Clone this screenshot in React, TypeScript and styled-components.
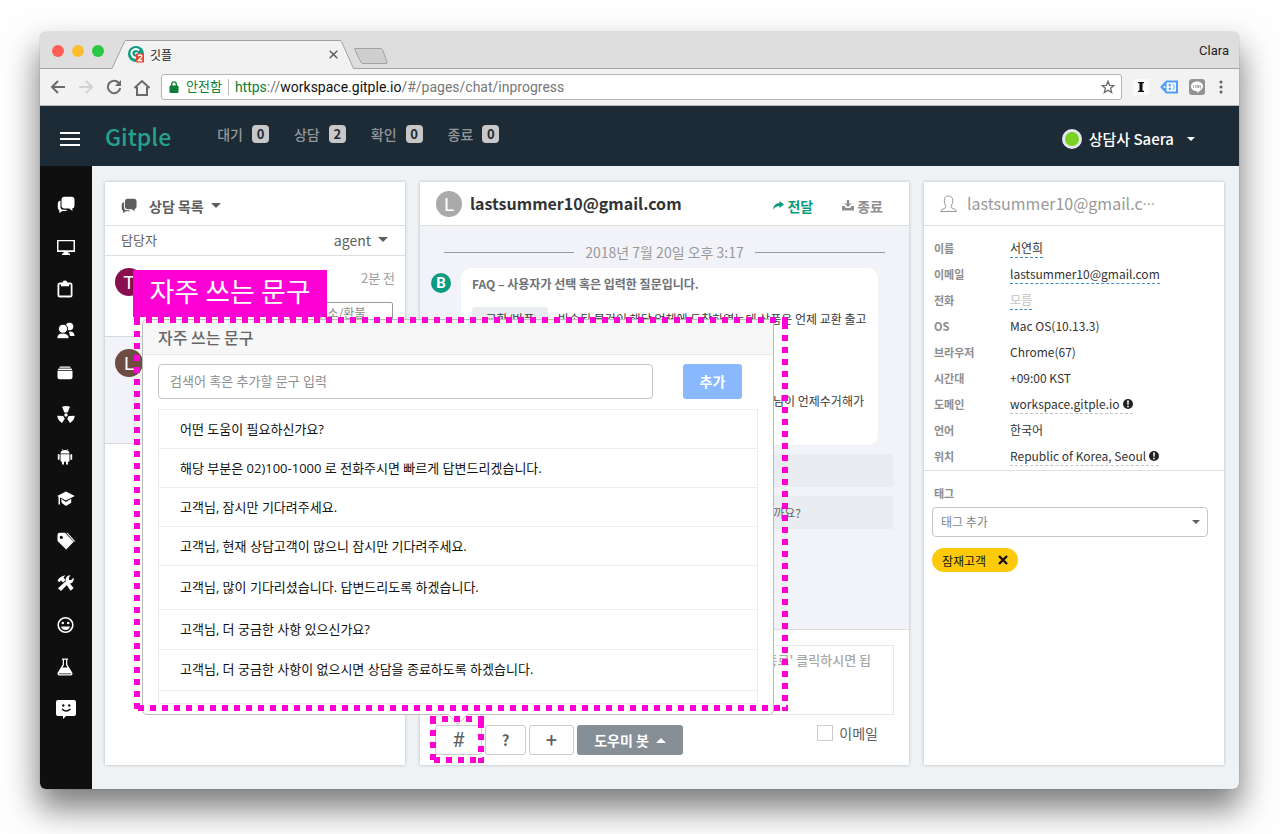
import React from "react";
import styled, { createGlobalStyle, css } from "styled-components";

const PINK = "#ff00d4";

const Global = createGlobalStyle`
  *, *::before, *::after { box-sizing: border-box; }
  body {
    margin: 0;
    background: #fefefe;
    font-family: "Noto Sans CJK KR", "Noto Sans", sans-serif;
    font-size: 13px;
    color: #5e5e5e;
  }
  button, input, select, textarea { font: inherit; color: inherit; margin: 0; }
  button { cursor: pointer; padding: 0; border: 0; background: none; }
  a { color: inherit; text-decoration: none; }
  ul { list-style: none; margin: 0; padding: 0; }
  h1, h2, p, dl, dd, dt { margin: 0; }
  svg { display: block; flex: none; }
`;

/* ---------- browser window ---------- */

const Desktop = styled.div`
  min-height: 100vh;
  padding: 32px 41px 45px 40px;
  overflow: hidden;
`;

const Window = styled.div`
  display: flex;
  flex-direction: column;
  min-height: calc(100vh - 77px);
  border-radius: 6px;
  overflow: hidden;
  background: #eef2f4;
  box-shadow: 0 0 1px rgba(0, 0, 0, 0.5), 0 18px 32px 2px rgba(0, 0, 0, 0.5);
`;

const TabStrip = styled.div`
  display: flex;
  align-items: flex-end;
  height: 37px;
  padding: 0 10px 0 12px;
  background: #dedede;
  box-shadow: inset 0 -1px #a4a4a4;
`;

const Lights = styled.div`
  display: flex;
  align-self: center;
  gap: 8px;
`;

const Light = styled.button<{ $color: string }>`
  width: 12px;
  height: 12px;
  border-radius: 50%;
  background: ${(p) => p.$color};
`;

const Tab = styled.div`
  position: relative;
  display: flex;
  align-items: center;
  width: 242px;
  height: 29px;
  margin-left: 8px;
  padding: 0 16px 0 16px;
  font-size: 12px;
  color: #222;
`;

const TabShape = styled.svg`
  position: absolute;
  inset: 0;
`;

const TabTitle = styled.span`
  position: relative;
  flex: 1;
  margin-left: 5px;
`;

const Layered = styled.span`
  position: relative;
`;

const Profile = styled.span`
  margin-left: auto;
  align-self: center;
  font: 13px/18px Roboto, "Liberation Sans", sans-serif;
  color: #222;
`;

const Toolbar = styled.div`
  display: flex;
  align-items: center;
  height: 37px;
  padding: 0 13px 0 4px;
  background: #f2f2f2;
  border-bottom: 1px solid #b6b6b6;
`;

const ToolButton = styled.button`
  display: flex;
  align-items: center;
  justify-content: center;
  width: 28px;
  height: 24px;
`;

const Address = styled.div`
  display: flex;
  align-items: center;
  flex: 1;
  height: 26px;
  margin: 0 10px 0 5px;
  padding: 0 6px 0 7px;
  border: 1px solid #b4b4b4;
  border-radius: 3px;
  background: #fff;
  color: #0b7f37;
  font-family: Roboto, "Noto Sans CJK KR", sans-serif;
  font-size: 14px;
  line-height: 18px;
`;

const Secure = styled.span`
  margin-left: 7px;
  padding-right: 6px;
  border-right: 1px solid #b8b8b8;
  font-size: 13px;
  line-height: 16px;
`;

const Url = styled.span`
  flex: 1;
  padding-left: 6px;
  color: #777;
  i { font-style: normal; color: #0b7f37; }
  b { font-weight: 400; color: #111; }
`;

/* ---------- application header ---------- */

const AppHeader = styled.header`
  display: flex;
  align-items: center;
  height: 60px;
  padding: 0 44px 0 20px;
  background: #1d2b36;
  color: #fff;
`;

const MenuButton = styled.button`
  display: flex;
  flex-direction: column;
  gap: 4px;
  width: 20px;
  margin-top: 6px;
  span { height: 2px; background: #fff; }
`;

const Brand = styled.a`
  margin-left: 25px;
  font-size: 23px;
  font-weight: 500;
  line-height: 36px;
  color: #26a18d;
`;

const Stats = styled.nav`
  display: flex;
  gap: 25px;
  margin: 0 auto 4px 46px;
`;

const Stat = styled.a`
  display: flex;
  align-items: center;
  gap: 9px;
  font-size: 14px;
  font-weight: 500;
  line-height: 20px;
  color: #949799;
`;

const Count = styled.b`
  width: 17px;
  height: 18px;
  border-radius: 4px;
  background: #c8c8c8;
  color: #1d2b36;
  font-size: 13px;
  line-height: 18px;
  text-align: center;
`;

const Agent = styled.button`
  display: flex;
  align-items: center;
  margin-top: 6px;
  font-size: 15px;
  font-weight: 500;
  line-height: 22px;
`;

const Online = styled.i`
  width: 20px;
  height: 20px;
  margin-right: 7px;
  border: 3px solid #e4e6f1;
  border-radius: 50%;
  background: #7bd321;
`;

const AgentName = styled.span`
  margin-right: 13px;
`;

const Caret = styled.i<{ $up?: boolean; $big?: boolean }>`
  display: inline-block;
  flex: none;
  border: ${(p) => (p.$big ? 5 : 4)}px solid transparent;
  ${(p) =>
    p.$up
      ? css`border-top-width: 0; border-bottom-color: currentColor;`
      : css`border-bottom-width: 0; border-top-color: currentColor;`}
`;

/* ---------- body ---------- */

const Body = styled.div`
  display: flex;
  flex: 1;
`;

const Side = styled.nav`
  display: flex;
  flex-direction: column;
  align-items: center;
  gap: 18px;
  width: 52px;
  padding-top: 27px;
  background: #0f0f0f;
`;

const SideLink = styled.a`
  display: flex;
  align-items: center;
  justify-content: center;
  width: 24px;
  height: 24px;
  color: #fff;
`;

const Workspace = styled.main`
  position: relative;
  display: flex;
  flex: 1;
  gap: 15px;
  min-width: 0;
  padding: 16px 15px 24px 13px;
`;

const Panel = styled.section<{ $fill?: boolean }>`
  display: flex;
  flex-direction: column;
  flex: ${(p) => (p.$fill ? "1 1 0" : "0 0 300px")};
  min-width: 0;
  background: #fff;
  box-shadow: 0 0 3px rgba(0, 0, 0, 0.25);
`;

const PanelHead = styled.div`
  display: flex;
  align-items: center;
  height: 44px;
  padding: 0 16px;
  border-bottom: 1px solid #dedede;
`;

const ListTitle = styled.button`
  display: flex;
  align-items: center;
  gap: 12px;
  margin-top: 4px;
  font-size: 14px;
  font-weight: 700;
  line-height: 20px;
`;

const ListName = styled.span`
  margin-right: -5px;
`;

const Owner = styled.div`
  display: flex;
  align-items: center;
  justify-content: space-between;
  height: 30px;
  padding: 0 17px 2px 16px;
  border-bottom: 1px solid #dedede;
  font-size: 13px;
`;

const OwnerPick = styled.button`
  display: flex;
  align-items: center;
  gap: 7px;
  font-size: 14px;
  line-height: 20px;
`;

const Conversation = styled.a<{ $active?: boolean }>`
  display: flex;
  align-items: flex-start;
  height: ${(p) => (p.$active ? 107 : 81)}px;
  padding: 12px 10px;
  border-bottom: 1px solid #d8d8dc;
  background: ${(p) => (p.$active ? "#f2f3f8" : "#fff")};
`;

const Avatar = styled.span<{ $bg: string; $size: number; $bold?: boolean }>`
  flex: none;
  width: ${(p) => p.$size}px;
  height: ${(p) => p.$size}px;
  border-radius: 50%;
  background: ${(p) => p.$bg};
  color: #fff;
  font-family: Roboto, sans-serif;
  font-size: ${(p) => (p.$size > 20 ? 19 : 15)}px;
  font-weight: ${(p) => (p.$bold ? 700 : 400)};
  line-height: ${(p) => p.$size + (p.$size > 20 ? 1 : 0)}px;
  text-align: center;
`;

const Bubble = styled.div`
  display: flex;
  flex-direction: column;
  align-items: flex-end;
  flex: 1;
`;

const Ago = styled.time`
  color: #a0a0a0;
  font-size: 13px;
  line-height: 20px;
`;

const Category = styled.span`
  width: 104px;
  height: 20px;
  margin: 14px 2px 0 0;
  border: 1px solid #999;
  border-radius: 2px;
  color: #8a8a8a;
  font-size: 12px;
  line-height: 20px;
  text-align: center;
`;

/* ---------- chat ---------- */

const ChatName = styled.h1`
  flex: 1;
  margin-left: 8px;
  padding-bottom: 2px;
  font-size: 16px;
  font-weight: 700;
  line-height: 26px;
  color: #333;
`;

const HeadAction = styled.button<{ $accent?: boolean }>`
  display: flex;
  align-items: center;
  gap: 3px;
  margin: 4px ${(p) => (p.$accent ? 13 : 10)}px 0 16px;
  font-size: 14px;
  font-weight: 700;
  line-height: 20px;
  color: ${(p) => (p.$accent ? "#089c7e" : "#8e8e8e")};
`;

const Thread = styled.div`
  flex: 1;
  padding: 16px 16px 0 11px;
  background: #f2f3f8;
  border-bottom: 1px solid #dedee2;
`;

const DateRule = styled.div`
  display: flex;
  align-items: center;
  gap: 11px;
  padding: 0 8px 0 13px;
  color: #999;
  font-size: 14px;
  line-height: 20px;
  &::before, &::after { content: ""; flex: 1; height: 1px; background: #999; }
`;

const Message = styled.div`
  display: flex;
  align-items: flex-start;
  gap: 10px;
  margin-top: 6px;
  padding-right: 15px;
  > span { margin-top: 5px; }
`;

const Card = styled.div`
  flex: 1;
  height: 177px;
  padding: 7px 11px;
  border-radius: 10px;
  background: #fff;
  line-height: 18px;
`;

const CardTitle = styled.p`
  font-size: 12px;
  font-weight: 700;
  color: #6e7175;
`;

const Question = styled.p`
  display: flex;
  align-items: center;
  gap: 10px;
  margin-top: 14px;
  font-size: 12px;
  line-height: 24px;
  color: #3a3a3a;
  white-space: nowrap;
`;

const Chip = styled.span`
  width: 76px;
  border-radius: 3px;
  background: #e9edf1;
  text-align: center;
`;

const Answer = styled.p`
  margin-top: 58px;
  padding-right: 3px;
  font-size: 12px;
  line-height: 24px;
  color: #3a3a3a;
  text-align: right;
`;

const Choice = styled.button`
  display: block;
  width: calc(100% - 30px);
  height: 33px;
  margin: 9px 0 0 30px;
  padding-right: 92px;
  background: #e9ecf1;
  font-size: 12px;
  color: #666;
  text-align: right;
`;

const Composer = styled.div`
  padding: 15px 15px 10px;
`;

const Draft = styled.textarea`
  display: block;
  width: 100%;
  height: 70px;
  padding: 4px 22px 4px 4px;
  border: 1px solid #e8e8e8;
  resize: none;
  font-size: 13px;
  font-weight: 500;
  line-height: 20px;
  color: #444;
  text-align: right;
  &::placeholder { color: #a8a8a8; }
`;

const Tools = styled.div`
  display: flex;
  align-items: flex-start;
  gap: 3px;
  margin-top: 10px;
`;

const Tool = styled.button<{ $width: number; $large?: boolean }>`
  display: flex;
  align-items: center;
  justify-content: center;
  width: ${(p) => p.$width}px;
  height: 30px;
  border: 1px solid #ccc;
  border-radius: 3px;
  font-family: ${(p) => (p.$large ? "Roboto, sans-serif" : "inherit")};
  font-size: ${(p) => (p.$large ? 20 : 15)}px;
  font-weight: ${(p) => (p.$large ? 400 : 700)};
  line-height: 28px;
`;

const BotButton = styled.button`
  display: flex;
  align-items: center;
  justify-content: center;
  gap: 7px;
  width: 106px;
  height: 30px;
  border-radius: 3px;
  background: #868e96;
  color: #fff;
  font-size: 14px;
  font-weight: 700;
`;

const MailOption = styled.label`
  display: flex;
  align-items: center;
  gap: 6px;
  margin: 0 16px 0 auto;
  font-size: 14px;
  line-height: 16px;
`;

const Tick = styled.input`
  appearance: none;
  width: 16px;
  height: 16px;
  border: 1px solid #ccc;
  background: #fff;
`;

/* ---------- customer ---------- */

const CustomerName = styled.h2`
  margin-left: 10px;
  font-size: 16px;
  font-weight: 400;
  line-height: 26px;
  color: #999;
  white-space: nowrap;
`;

const Cut = styled.span`
  font-family: Roboto, sans-serif;
`;

const Facts = styled.dl`
  display: grid;
  grid-template-columns: 76px 1fr;
  grid-auto-rows: 26px;
  align-items: center;
  padding: 9px 10px 1px;
  border-bottom: 1px solid #dedede;
  line-height: 18px;
`;

const Term = styled.dt`
  font-size: 11px;
  font-weight: 700;
  color: #8c8c8c;
`;

const Value = styled.dd<{ $dash?: string; $muted?: boolean }>`
  display: flex;
  align-items: center;
  gap: 3px;
  justify-self: start;
  height: 19px;
  font-size: 12px;
  font-weight: ${(p) => (p.$muted ? 500 : 400)};
  color: ${(p) => (p.$muted ? "#ccc" : "#333")};
  border-bottom: 1px ${(p) => (p.$dash ? "dashed " + p.$dash : "solid transparent")};
`;

const Tags = styled.div`
  display: flex;
  flex-direction: column;
  align-items: flex-start;
  padding: 13px 16px 0 8px;
`;

const TagLabel = styled.label`
  padding-left: 2px;
  font-size: 11px;
  font-weight: 700;
  line-height: 18px;
  color: #8c8c8c;
`;

const SelectWrap = styled.div`
  display: grid;
  align-items: center;
  width: 100%;
  margin: 5px 0 11px;
  > * { grid-area: 1 / 1; }
  > i { justify-self: end; margin-right: 8px; pointer-events: none; }
`;

const TagSelect = styled.select`
  appearance: none;
  width: 100%;
  height: 30px;
  padding: 0 8px 2px;
  border: 1px solid #c6c6c6;
  border-radius: 4px;
  background: #fff;
  font-size: 12px;
  color: #7d858d;
`;

const Tag = styled.span`
  display: flex;
  align-items: center;
  gap: 12px;
  height: 24px;
  padding: 0 10px;
  border-radius: 12px;
  background: #fdca0b;
  color: #111;
  font-size: 12px;
`;

/* ---------- saved phrases ---------- */

const Popover = styled.div`
  position: absolute;
  top: 153px;
  left: 50px;
  width: 632px;
  border: 1px solid #bcbcbc;
  border-radius: 5px;
  background: #fff;
`;

const Pointer = styled.svg`
  position: absolute;
  bottom: -11px;
  left: 305px;
`;

const PopoverTitle = styled.h2`
  height: 35px;
  padding-left: 15px;
  border-bottom: 1px solid #ebebeb;
  border-radius: 5px 5px 0 0;
  background: #f7f7f7;
  font-size: 16px;
  font-weight: 500;
  line-height: 34px;
  color: #666;
`;

const SearchRow = styled.form`
  display: flex;
  gap: 30px;
  padding: 9px 31px 10px 15px;
`;

const Search = styled.input`
  flex: 1;
  min-width: 0;
  height: 35px;
  padding: 0 12px 1px 11px;
  border: 1px solid #c4c4c4;
  border-radius: 4px;
  font-family: "Open Sans", "Noto Sans CJK KR", sans-serif;
  font-size: 13px;
  &::placeholder { color: #8e8e8e; }
`;

const AddButton = styled.button`
  width: 59px;
  height: 35px;
  padding-bottom: 1px;
  border-radius: 3px;
  background: #8ab8ff;
  color: #fff;
  font-size: 14px;
  font-weight: 700;
`;

const Phrases = styled.ul`
  margin: 0 15px 10px 15px;
  border: 1px solid #ebebeb;
`;

const Phrase = styled.li<{ $height: number }>`
  height: ${(p) => p.$height}px;
  padding-left: 21px;
  border-bottom: 1px solid #ebebeb;
  font-family: "Open Sans", "Noto Sans CJK KR", sans-serif;
  font-size: 13px;
  line-height: 38px;
  padding-top: ${(p) => (p.$height > 43 ? 2 : 0)}px;
  color: #111;
`;

const PhraseEnd = styled.li`
  height: 12px;
`;

/* ---------- guide marks ---------- */

const Marker = styled.div<{ $x: number; $y: number; $w: number; $h: number }>`
  position: absolute;
  left: ${(p) => p.$x}px;
  top: ${(p) => p.$y}px;
  width: ${(p) => p.$w}px;
  height: ${(p) => p.$h}px;
  pointer-events: none;
  background:
    repeating-linear-gradient(90deg, ${PINK} 0 6px, transparent 6px 12px) top / 100% 6px no-repeat,
    repeating-linear-gradient(90deg, transparent 0 4px, ${PINK} 4px 10px, transparent 10px 12px) bottom / 100% 6px no-repeat,
    repeating-linear-gradient(180deg, transparent 0 2px, ${PINK} 2px 8px, transparent 8px 12px) left / 6px 100% no-repeat,
    repeating-linear-gradient(180deg, transparent 0 6px, ${PINK} 6px 12px) right / 6px 100% no-repeat;
`;

const MarkerLabel = styled.div`
  position: absolute;
  top: 104px;
  left: 41px;
  width: 194px;
  height: 47px;
  background: ${PINK};
  color: #fff;
  font-size: 27px;
  font-weight: 400;
  line-height: 42px;
  text-align: center;
`;

/* ---------- icons ---------- */

const ChatsIcon = ({ size = 18 }: { size?: number }) => (
  <svg width={size} height={size} viewBox="0 0 18 18" fill="currentColor">
    <path d="M7.500.8h7q3 0 3 3v5.700q0 2.600-2.300 3l.3 2.500-3.300-2.400H7.500q-3 0-3-3V3.800q0-3 3-3z" />
    <path d="M3.500 4.500Q.800 5 .800 7.500V12q0 1.600 1.500 2.200V17l3.200-2h4.800L8.900 13.700H6.500q-3 0-3-3z" />
  </svg>
);

const sideIcons: [string, React.ReactNode][] = [
  ["대화", <ChatsIcon key="i" />],
  ["모니터", <path key="i" fillRule="evenodd" d="M0 2h18v12h-6.500v1.500h1.500V17H5v-1.500h1.500V14H0zM1.500 3.300v9h15v-9z" />],
  ["업무", <path key="i" fillRule="evenodd" d="M3 2.500h2.500Q6 .5 8 .5t2.500 2H13q2.500 0 2.500 2.500V15q0 2.500-2.500 2.500H3Q.500 17.500.500 15V5Q.500 2.500 3 2.500zM2.300 4.600v11h11.400v-11H12V6.200H4V4.600z" />],
  ["고객", <g key="i"><circle cx="12.500" cy="4.500" r="3.800" /><path d="M12 9.500q5.500-.5 5.500 4.500H13z" /><circle cx="6" cy="6.800" r="4.600" stroke="#0f0f0f" strokeWidth="1" /><path d="M0 16.500Q0 11 6 11.200T12 16.500z" stroke="#0f0f0f" strokeWidth=".6" /></g>],
  ["보관함", <path key="i" d="M3 2.500h10l.8 1.300H2.200zM1.500 4.600h13l.7 1.300H.8zM.500 6.700h15v6.500q0 2-2 2h-11q-2 0-2-2z" />],
  ["분석", <g key="i"><path d="M5 .800Q9-.6 13 .8L10.600 6.500H7.400z" /><path d="M.200 9.800l6 .3 1.600 2.700L5 17Q.800 14.500.200 9.800zM17.800 9.800l-6 .3-1.600 2.700L13 17q4.200-2.500 4.800-7.200z" /><circle cx="9" cy="9" r="1.700" /></g>],
  ["안드로이드", <g key="i"><path d="M3.500 5.500Q3.500 2 8 2t4.500 3.500zM3.500 6.300h9v6.500q0 1-1 1h-7q-1 0-1-1zM.800 6.500q.8-.8 1.800 0v5q-1 .8-1.800 0zM13.400 6.500q.8-.8 1.800 0v5q-1 .8-1.800 0z" /><path d="M5 13h2v3.500H5zM9 13h2v3.500H9z" /><path d="M5 1l1 1.500M11 1l-1 1.500" stroke="currentColor" strokeWidth=".7" /></g>],
  ["학습", <g key="i"><path d="M9 1.500L17.800 6 9 10.500.200 6z" /><path d="M1.500 6.500H3V14.500H1.500zM4 8.800L9 12l5.200-3.200v4L9 16l-4.200-2.900z" /></g>],
  ["태그", <path key="i" fillRule="evenodd" d="M.500 3Q.500.800 2.800.800H8L16.700 9.800 9.200 17.500.500 9zM4.300 3.800a1.600 1.600 0 1 0 0 3.200 1.600 1.600 0 0 0 0-3.200zM9.200.800H10.500L18 9l-.7.800z" />],
  ["설정", <g key="i"><path d="M.500 6.500Q3 2 8.500 1.200L6.500 3.500l2 2.500-2.500 2.500-2.100-2-1.600 1.700zM9.600 10.900L12 8.500l4.600 5.400-2.900 2.800z" /><path d="M1 14.300l7.700-7Q8 3.300 11.500 1.500l2-.3-1.800 2.800.5 1.900 2 .2 2.300-2.500q.9 4.400-2.700 6l-2.700.2L4 17z" /></g>],
  ["만족도", <g key="i"><circle cx="8.500" cy="9" r="7.300" fill="none" stroke="currentColor" strokeWidth="1.600" /><circle cx="5.800" cy="7" r="1.300" /><circle cx="11.200" cy="7" r="1.300" /><path d="M4 10.500h9q-1 3.500-4.500 3.500T4 10.500z" /></g>],
  ["실험실", <path key="i" fillRule="evenodd" d="M5 .500h6v1.300h-.7v4.700L15.500 15q.3 2-1.500 2.500H2Q.200 17 .500 15L5.700 6.500V1.800H5zM7 1.800V7l-1.500 2.500h5L9 7V1.800zM1.600 15.500q.2.700 1 .8h10.800q.8-.1 1-.8z" />],
];

const SideGlyph = ({ children }: { children: React.ReactNode }) => (
  <svg width="18" height="18" viewBox="0 0 18 18" fill="currentColor">{children}</svg>
);

const InfoDot = () => (
  <svg width="10" height="10" viewBox="0 0 10 10">
    <circle cx="5" cy="5" r="5" fill="#222" />
    <path d="M4.100 1.500h1.800l-.3 4.300H4.400zM4.200 6.700h1.600v1.600H4.200z" fill="#fff" />
  </svg>
);

const stats = [["대기", 0], ["상담", 2], ["확인", 0], ["종료", 0]] as const;

const facts: { term: string; value: string; dash?: string; muted?: boolean; info?: boolean }[] = [
  { term: "이름", value: "서연희", dash: "#428bca" },
  { term: "이메일", value: "lastsummer10@gmail.com", dash: "#428bca" },
  { term: "전화", value: "모름", dash: "#428bca", muted: true },
  { term: "OS", value: "Mac OS(10.13.3)" },
  { term: "브라우저", value: "Chrome(67)" },
  { term: "시간대", value: "+09:00 KST" },
  { term: "도메인", value: "workspace.gitple.io", dash: "#c4c4c4", info: true },
  { term: "언어", value: "한국어" },
  { term: "위치", value: "Republic of Korea, Seoul", dash: "#c4c4c4", info: true },
];

const phrases: [string, number][] = [
  ["어떤 도움이 필요하신가요?", 39],
  ["해당 부분은 02)100-1000 로 전화주시면 빠르게 답변드리겠습니다.", 39],
  ["고객님, 잠시만 기다려주세요.", 39],
  ["고객님, 현재 상담고객이 많으니 잠시만 기다려주세요.", 39],
  ["고객님, 많이 기다리셨습니다. 답변드리도록 하겠습니다.", 44],
  ["고객님, 더 궁금한 사항 있으신가요?", 40],
  ["고객님, 더 궁금한 사항이 없으시면 상담을 종료하도록 하겠습니다.", 41],
];

const BrowserChrome = () => (
  <>
    <TabStrip>
      <Lights>
        <Light $color="#ff5f57" aria-label="닫기" />
        <Light $color="#ffbd2e" aria-label="최소화" />
        <Light $color="#28c940" aria-label="확대" />
      </Lights>
      <Tab>
        <TabShape width="242" height="29" viewBox="0 0 242 29">
          <path d="M0 28.500 L12.500 1.500 Q13 .5 14 .5 H228 Q229 .5 229.500 1.500 L241.500 28.500 V29 H0z" fill="#f2f2f2" />
          <path d="M0 28.500 L12.500 1.500 Q13 .5 14 .5 H228 Q229 .5 229.500 1.500 L241.500 28.500" fill="none" stroke="#a0a0a0" />
        </TabShape>
        <Layered>
          <svg width="17" height="17" viewBox="0 0 17 17">
            <circle cx="8" cy="8" r="8" fill="#0a9b80" />
            <path d="M11 4.500A4.300 4.300 0 1 0 9 11.500" fill="none" stroke="#fff" strokeWidth="2" />
            <circle cx="8.500" cy="7.500" r="1.500" fill="#fff" />
            <rect x="8" y="7.500" width="8" height="9" fill="#e8462c" />
            <path d="M10 10q2-2 3.600-.4.700 1.500-1 2.500L10.300 14.500H14.300" fill="none" stroke="#fff" strokeWidth="1.400" />
          </svg>
        </Layered>
        <TabTitle>깃플</TabTitle>
        <Layered>
          <svg width="9" height="9" viewBox="0 0 9 9" stroke="#5a5a5a" strokeWidth="1.400"><path d="M.7.7l7.600 7.600M8.300.7L.7 8.300" /></svg>
        </Layered>
      </Tab>
      <svg width="34" height="23" viewBox="0 0 34 23">
        <path d="M-2.500 2.500H23.500Q25 2.500 25.500 3.500L30 16q.5 1.500-1 1.500H6q-1.500 0-2-1L-2 4Q-2.500 2.500-2.500 2.500z" transform="translate(3 0)" fill="#cfcfcf" stroke="#a2a2a2" />
      </svg>
      <Profile>Clara</Profile>
    </TabStrip>
    <Toolbar>
      <ToolButton aria-label="뒤로"><svg width="16" height="14" viewBox="0 0 16 14" fill="none" stroke="#6a6a6e" strokeWidth="2"><path d="M15 7H2M8 1L2 7l6 6" /></svg></ToolButton>
      <ToolButton aria-label="앞으로"><svg width="16" height="14" viewBox="0 0 16 14" fill="none" stroke="#d2d2d2" strokeWidth="2"><path d="M1 7h13M8 1l6 6-6 6" /></svg></ToolButton>
      <ToolButton aria-label="새로고침"><svg width="16" height="16" viewBox="0 0 16 16"><path d="M13.200 4.500A6.200 6.200 0 1 0 14.200 9" fill="none" stroke="#6a6a6e" strokeWidth="2" /><path d="M15 1v6H9z" fill="#6a6a6e" /></svg></ToolButton>
      <ToolButton aria-label="홈"><svg width="18" height="17" viewBox="0 0 18 17" fill="none" stroke="#6a6a6e" strokeWidth="2"><path d="M1.500 9L9 2l7.500 7M4 8v8h10V8" /></svg></ToolButton>
      <Address>
        <svg width="10" height="12" viewBox="0 0 10 12"><path d="M1 5h8v6.500H1z" fill="#0b7f37" stroke="#0b7f37" /><path d="M2.700 5V3.200a2.300 2.300 0 0 1 4.600 0V5" fill="none" stroke="#0b7f37" strokeWidth="1.300" /></svg>
        <Secure>안전함</Secure>
        <Url><i>https</i>://<b>workspace.gitple.io</b>/#/pages/chat/inprogress</Url>
        <svg width="14" height="14" viewBox="0 0 14 14" fill="none" stroke="#6a6a6e" strokeWidth="1.300"><path d="M7 1.300l1.600 4 4.300.3-3.300 2.700 1.100 4.200L7 10.200l-3.700 2.300 1.100-4.200L1.100 5.600l4.300-.3z" /></svg>
      </Address>
      <svg width="94" height="16" viewBox="0 0 94 16">
        <rect width="16" height="16" x="1" fill="#fafafa" />
        <path d="M6 3h6v1.200h-1.500v7.600H12V13H6v-1.200h1.500V4.200H6z" fill="#111" />
        <path d="M34.500 2.500H45v11H34.500L29.500 8z" fill="#fff" stroke="#4e9cf5" strokeWidth="2" />
        <path d="M34.500 3v10L30 8z" fill="#4e9cf5" /><circle cx="32.500" cy="8" r="1" fill="#fff" />
        <path d="M37 5.500h1.500V7H37zM37 9h1.500v1.500H37zM40.500 5q3.500 3 0 6" fill="none" stroke="#4e9cf5" />
        <rect x="57" width="16" height="16" rx="3" fill="#939393" />
        <path d="M65 2.500c4 0 6 2.500 6 4.800 0 2.700-3.500 5-6 6.700v-1.800c-4 0-6-2.300-6-4.900s2-4.800 6-4.800z" fill="#fff" />
        <path d="M61.500 6v3M63.500 6v3M65 9V6l1.500 3V6M68 6v3h1M68 7.500h1" stroke="#939393" strokeWidth=".7" fill="none" />
        <g fill="#5f6064"><circle cx="89" cy="3" r="1.500" /><circle cx="89" cy="8" r="1.500" /><circle cx="89" cy="13" r="1.500" /></g>
      </svg>
    </Toolbar>
  </>
);

export default function App() {
  return (
    <Desktop>
      <Global />
      <Window>
        <BrowserChrome />
        <AppHeader>
          <MenuButton aria-label="메뉴"><span /><span /><span /></MenuButton>
          <Brand href="#">Gitple</Brand>
          <Stats>
            {stats.map(([label, n]) => (
              <Stat href="#" key={label}>{label}<Count>{n}</Count></Stat>
            ))}
          </Stats>
          <Agent><Online /><AgentName>상담사 Saera</AgentName><Caret /></Agent>
        </AppHeader>
        <Body>
          <Side>
            {sideIcons.map(([name, icon], i) => (
              <SideLink href="#" key={name} aria-label={name}>{i ? <SideGlyph>{icon}</SideGlyph> : icon}</SideLink>
            ))}
            <SideLink href="#" aria-label="문의">
              <svg width="20" height="19" viewBox="0 0 20 19"><path d="M2 0h16q2 0 2 2v12q0 2-2 2h-8l-3 3v-3H2q-2 0-2-2V2q0-2 2-2z" fill="#fff" /><circle cx="7.300" cy="5.500" r="1.200" fill="#0f0f0f" /><circle cx="13.200" cy="5.500" r="1.200" fill="#0f0f0f" /><path d="M6 9q4.200 4 8.500 0" fill="none" stroke="#0f0f0f" strokeWidth="1.400" /></svg>
            </SideLink>
          </Side>
          <Workspace>
            <Panel>
              <PanelHead>
                <ListTitle><ChatsIcon size={16} /><ListName>상담 목록</ListName><Caret $big /></ListTitle>
              </PanelHead>
              <Owner>담당자<OwnerPick>agent<Caret $big /></OwnerPick></Owner>
              <Conversation href="#">
                <Avatar $bg="#880e4f" $size={28}>T</Avatar>
                <Bubble><Ago>2분 전</Ago><Category>취소/환불</Category></Bubble>
              </Conversation>
              <Conversation href="#" $active><Avatar $bg="#6d4c41" $size={28}>L</Avatar></Conversation>
            </Panel>

            <Panel $fill>
              <PanelHead>
                <Avatar $bg="#aaaaaa" $size={26}>L</Avatar>
                <ChatName>lastsummer10@gmail.com</ChatName>
                <HeadAction $accent>
                  <svg width="11" height="9" viewBox="0 0 11 9" fill="currentColor"><path d="M6.500 0L11 3.500 6.500 7V5Q2.500 5 0 8.500.8 2 6.500 2z" /></svg>
                  전달
                </HeadAction>
                <HeadAction>
                  <svg width="12" height="11" viewBox="0 0 12 11" fill="currentColor"><path d="M4.800 0h2.400v3.500h2.300L6 7 2.500 3.500h2.300zM0 6h2.500L4 8h4l1.500-2H12v4.500H0z" /></svg>
                  종료
                </HeadAction>
              </PanelHead>
              <Thread>
                <DateRule>2018년 7월 20일 오후 3:17</DateRule>
                <Message>
                  <Avatar $bg="#0a9b80" $size={20} $bold>B</Avatar>
                  <Card>
                    <CardTitle>FAQ – 사용자가 선택 혹은 입력한 질문입니다.</CardTitle>
                    <Question><Chip>교환/반품</Chip>반송된 물건이 해당 업체에 도착하였는데 상품은 언제 교환 출고</Question>
                    <Answer>기사님이 언제수거해가</Answer>
                  </Card>
                </Message>
                <Choice aria-label="다른 질문" />
                <Choice>할까요?</Choice>
              </Thread>
              <Composer>
                <Draft aria-label="메시지" placeholder="'종료' 클릭하시면 됩" />
                <Tools>
                  <Tool $width={47} $large aria-label="자주 쓰는 문구">#</Tool>
                  <Tool $width={41}>?</Tool>
                  <Tool $width={45} $large>+</Tool>
                  <BotButton>도우미 봇<Caret $up $big /></BotButton>
                  <MailOption><Tick type="checkbox" />이메일</MailOption>
                </Tools>
              </Composer>
            </Panel>

            <Panel>
              <PanelHead>
                <svg width="17" height="18" viewBox="0 0 17 18" fill="none" stroke="#999"><path d="M6 11.500Q4.300 9 4.300 5.500 4.300 1 8.500 1t4.200 4.500q0 3.500-1.700 6 0 1.500 2 2 3 .8 3.300 3H.700q.3-2.200 3.300-3 2-.5 2-2z" /></svg>
                <CustomerName>lastsummer10@gmail.c<Cut>···</Cut></CustomerName>
              </PanelHead>
              <Facts>
                {facts.map((f) => (
                  <React.Fragment key={f.term}>
                    <Term>{f.term}</Term>
                    <Value $dash={f.dash} $muted={f.muted}>{f.value}{f.info && <InfoDot />}</Value>
                  </React.Fragment>
                ))}
              </Facts>
              <Tags>
                <TagLabel htmlFor="tag">태그</TagLabel>
                <SelectWrap>
                  <TagSelect id="tag"><option>태그 추가</option></TagSelect>
                  <Caret />
                </SelectWrap>
                <Tag>
                  잠재고객
                  <button aria-label="태그 삭제"><svg width="10" height="10" viewBox="0 0 10 10" stroke="#111" strokeWidth="2.400"><path d="M1 1l8 8M9 1L1 9" /></svg></button>
                </Tag>
              </Tags>
            </Panel>

            <Popover role="dialog" aria-label="자주 쓰는 문구">
              <PopoverTitle>자주 쓰는 문구</PopoverTitle>
              <SearchRow>
                <Search aria-label="문구 검색" placeholder="검색어 혹은 추가할 문구 입력" />
                <AddButton type="button">추가</AddButton>
              </SearchRow>
              <Phrases>
                {phrases.map(([text, height]) => <Phrase key={text} $height={height}>{text}</Phrase>)}
                <PhraseEnd />
              </Phrases>
              <Pointer width="20" height="11" viewBox="0 0 20 11"><path d="M0 0L10 10.500 20 0" fill="#fff" stroke="#bcbcbc" /></Pointer>
            </Popover>
            <Marker $x={42} $y={151} $w={654} $h={394} />
            <Marker $x={338} $y={550} $w={54} $h={47} />
            <MarkerLabel>자주 쓰는 문구</MarkerLabel>
          </Workspace>
        </Body>
      </Window>
    </Desktop>
  );
}
